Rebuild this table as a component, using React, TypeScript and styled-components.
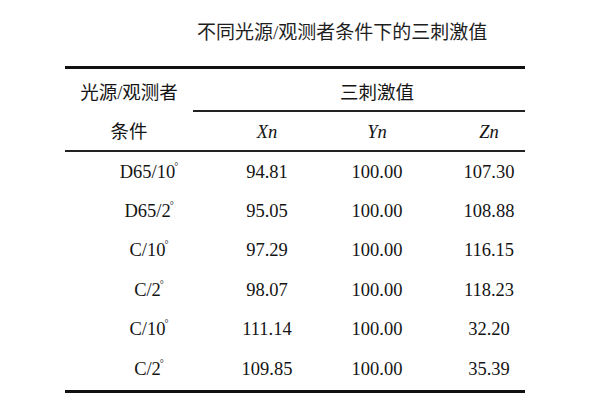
import styled, { createGlobalStyle } from 'styled-components';

const GlobalStyle = createGlobalStyle`
  html, body {
    margin: 0;
    padding: 0;
    background: #ffffff;
  }
  body {
    font-family: "Liberation Serif", "Noto Sans CJK SC", serif;
    color: #141414;
  }
`;

// widths and left padding of the four columns (data rows)
const columns = [
    {width: 128, pad: 40},
    {width: 137, pad: 11},
    {width: 94, pad: 0},
    {width: 101, pad: 29},
];

const rows = [
    {source: 'D65/10', xn: '94.81', yn: '100.00', zn: '107.30'},
    {source: 'D65/2', xn: '95.05', yn: '100.00', zn: '108.88'},
    {source: 'C/10', xn: '97.29', yn: '100.00', zn: '116.15'},
    {source: 'C/2', xn: '98.07', yn: '100.00', zn: '118.23'},
    {source: 'C/10', xn: '111.14', yn: '100.00', zn: '32.20'},
    {source: 'C/2', xn: '109.85', yn: '100.00', zn: '35.39'},
];

const App = () => {
    return (
        <Page>
            <GlobalStyle />
            <Title>不同光源/观测者条件下的三刺激值</Title>

            <Table>
                {/* Header, first line */}
                <HeadTop>
                    <HeadCell $pad={0}>光源/观测者</HeadCell>
                    <GroupCell>三刺激值</GroupCell>
                </HeadTop>

                {/* Header, second line */}
                <HeadBottom>
                    <HeadCell $pad={0}>条件</HeadCell>
                    <HeadCell $pad={columns[1].pad}><Italic>Xn</Italic></HeadCell>
                    <HeadCell $pad={columns[2].pad}><Italic>Yn</Italic></HeadCell>
                    <HeadCell $pad={columns[3].pad}><Italic>Zn</Italic></HeadCell>
                </HeadBottom>

                {/* Body */}
                <Body>
                    {rows.map((row, index) => (
                        <Row key={index}>
                            <Cell $pad={columns[0].pad}>{row.source}<Deg>°</Deg></Cell>
                            <Cell $pad={columns[1].pad}>{row.xn}</Cell>
                            <Cell $pad={columns[2].pad}>{row.yn}</Cell>
                            <Cell $pad={columns[3].pad}>{row.zn}</Cell>
                        </Row>
                    ))}
                </Body>
            </Table>
        </Page>
    )
}

export default App;

const Page = styled.div`
  width: 600px;
  height: 400px;
  overflow: hidden;
  background: #ffffff;
`;

const Title = styled.div`
  height: 66px;
  line-height: 66px;
  padding-left: 197px;
  font-family: "Liberation Serif", "Noto Sans CJK SC", serif;
  font-size: 19px;
  color: #1e1e1e;
`;

const Table = styled.div`
  margin-left: 65px;
  width: 460px;
  border-top: 3px solid #111;
`;

const grid = columns.map(c => `${c.width}px`).join(' ');

const HeadTop = styled.div`
  display: grid;
  grid-template-columns: 128px 1fr;
`;

const HeadBottom = styled.div`
  display: grid;
  grid-template-columns: ${grid};
  border-bottom: 2px solid #222;
`;

const HeadCell = styled.div<{ $pad: number }>`
  padding: 9px 0 2px ${p => p.$pad}px;
  height: 30px;
  line-height: 30px;
  text-align: center;
  font-size: 18.5px;
  border-bottom: 2px solid transparent;
  white-space: nowrap;

  ${HeadBottom} & {
    padding-top: 5px;
    padding-bottom: 3px;
    border-bottom: 0;
  }
`;

const GroupCell = styled.div`
  padding: 9px 0 2px 36px;
  height: 30px;
  line-height: 30px;
  text-align: center;
  font-size: 18.5px;
  border-bottom: 2px solid #222;
`;

const Italic = styled.span`
  font-style: italic;
  font-size: 18.5px;
`;

const Body = styled.div`
  padding-bottom: 2px;
  border-bottom: 3px solid #111;
`;

const Row = styled.div`
  display: grid;
  grid-template-columns: ${grid};
  height: 39.4px;
  align-items: center;
`;

const Cell = styled.div<{ $pad: number }>`
  padding-left: ${p => p.$pad}px;
  text-align: center;
  font-size: 18.5px;
  line-height: 22px;
  white-space: nowrap;
`;

const Deg = styled.span`
  display: inline-block;
  font-size: 10px;
  line-height: 1;
  vertical-align: 8px;
  margin-left: -1px;
`;
